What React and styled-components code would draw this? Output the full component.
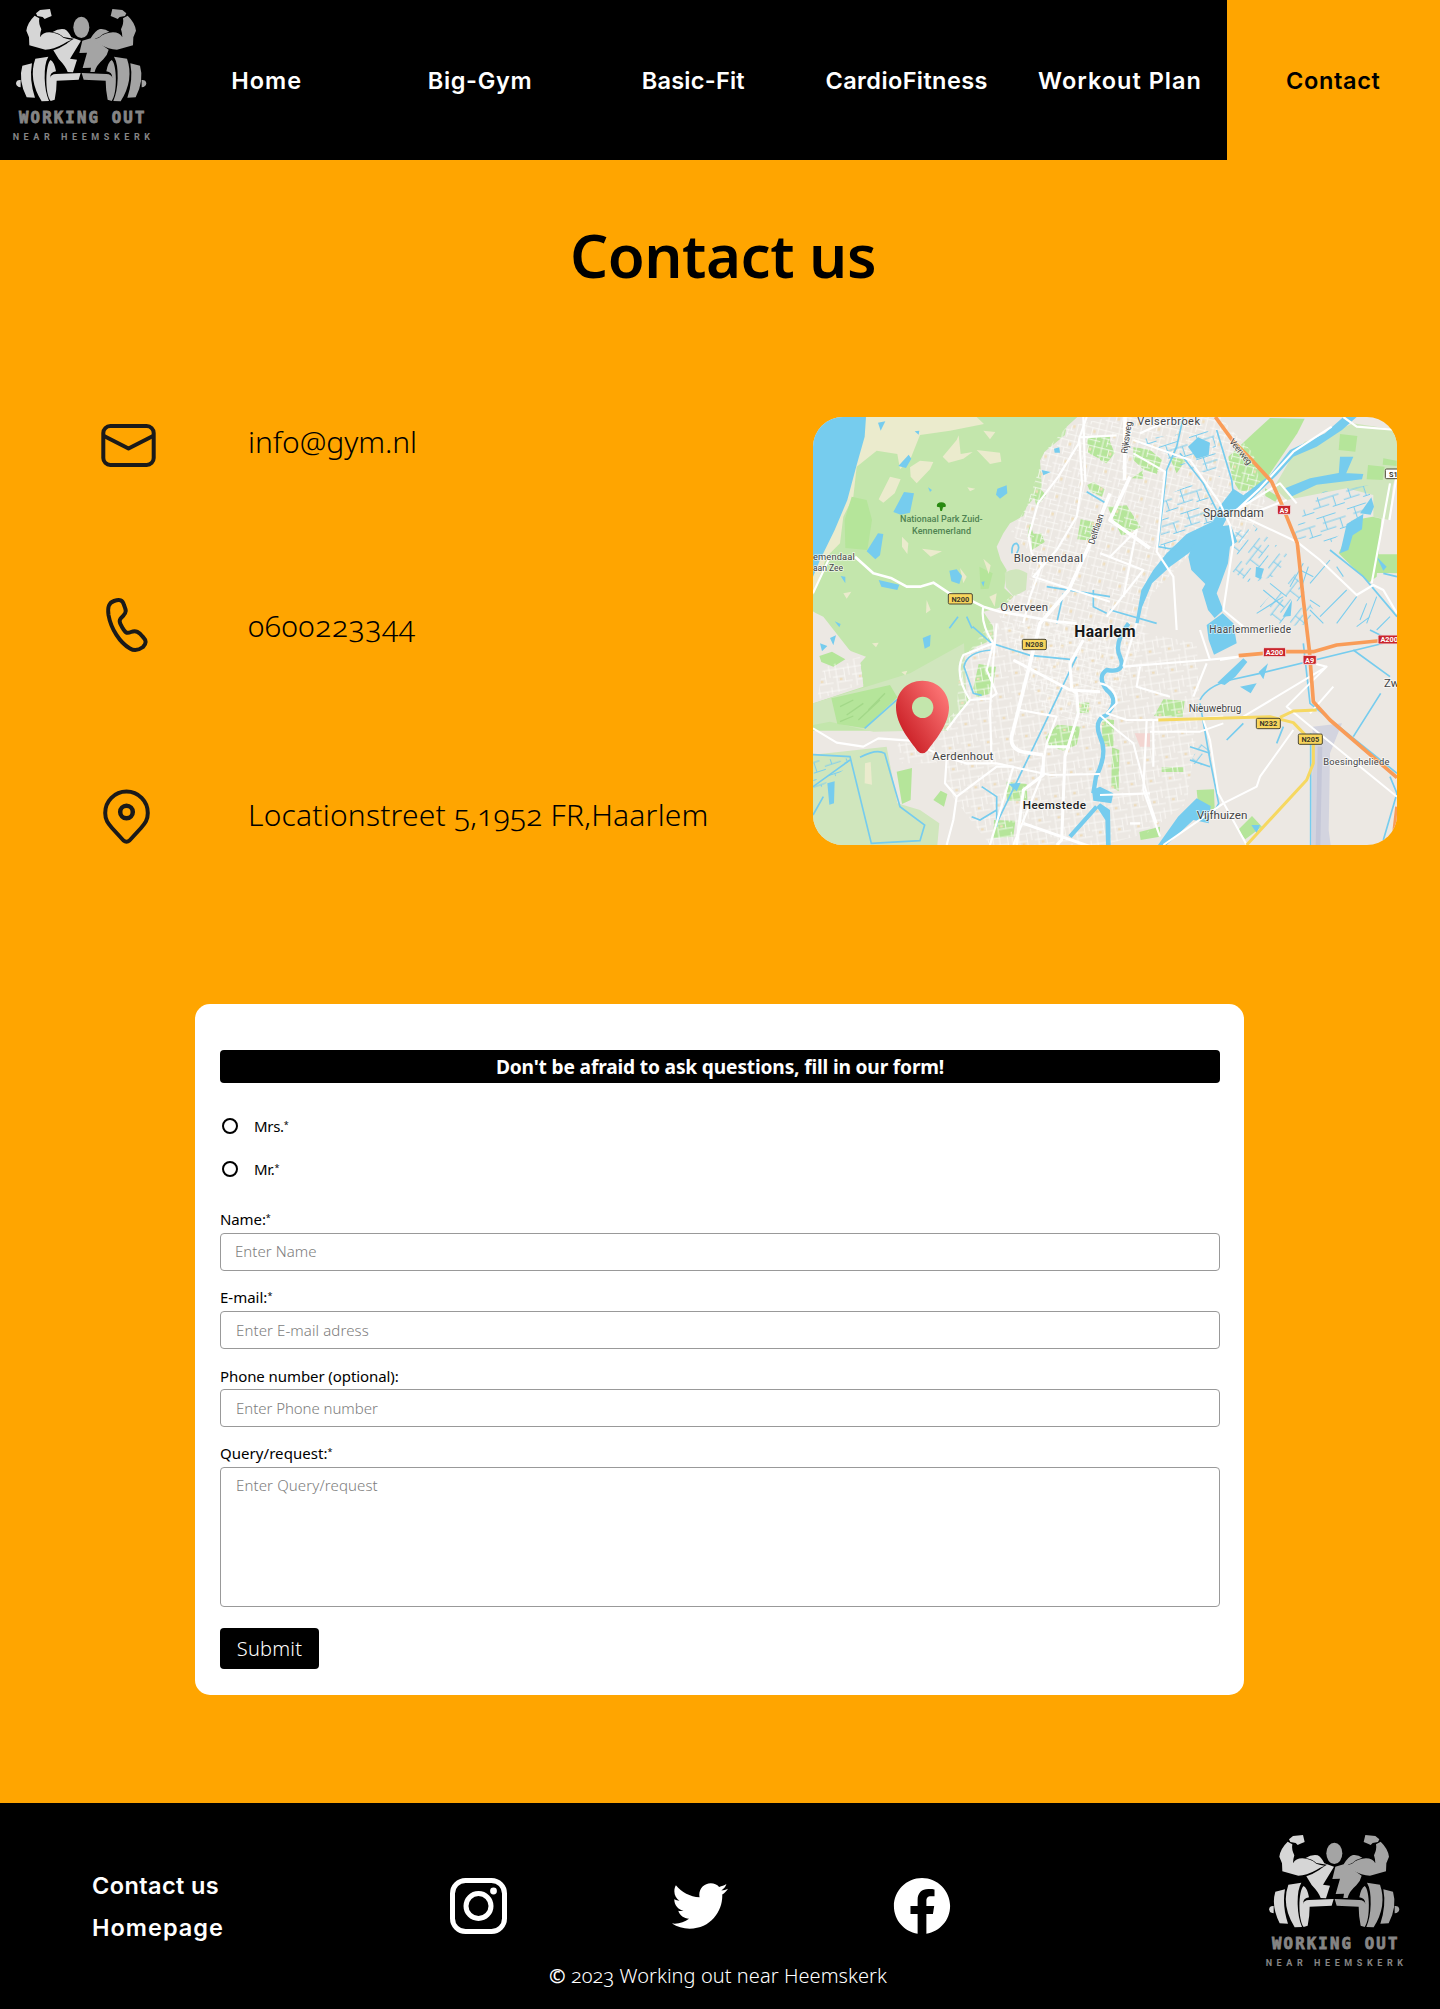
import React from "react";
import styled, { createGlobalStyle, css } from "styled-components";
import { FaFacebook, FaTwitter } from "react-icons/fa";

const GlobalStyle = createGlobalStyle`
  *, *::before, *::after { box-sizing: border-box; }
  body { margin: 0; background: #ffa500; }
`;

const bodyFont = css`
  font-family: "Noto Sans", "Open Sans", sans-serif;
  font-variant-numeric: oldstyle-nums;
`;
const navFont = css`
  font-family: Inter, "Open Sans", sans-serif;
  font-size: 23.5px;
  font-weight: 600;
`;

const Page = styled.div`
  ${bodyFont}
  display: flex;
  flex-direction: column;
  width: 1440px;
  min-height: 2009px;
  background: #ffa500;
  color: #000;
`;

/* Header */
const Header = styled.header`
  display: flex;
  height: 160px;
  background: #000;
`;
const LogoArt = styled.svg`
  display: block;
  flex: none;
  width: 160px;
  height: 160px;
`;
const Nav = styled.nav`
  display: grid;
  grid-template-columns: repeat(6, 1fr);
  flex: 1;
`;
const NavLink = styled.a`
  ${navFont}
  display: flex;
  align-items: center;
  justify-content: center;
  letter-spacing: ${(p) => p.$spacing}px;
  color: ${(p) => (p.$active ? "#000" : "#fff")};
  background: ${(p) => (p.$active ? "#ffa500" : "transparent")};
  text-decoration: none;
  white-space: nowrap;
`;

/* Contact details */
const Title = styled.h1`
  margin: 59px 0 126px;
  padding-left: 6px;
  font-size: 60px;
  font-weight: 560;
  line-height: 72px;
  letter-spacing: ${(p) => p.$spacing}px;
  text-align: center;
`;
const ContactSection = styled.section`
  display: grid;
  grid-template-columns: 1fr 584px;
  height: 428px;
  padding-right: 43px;
`;
const DetailList = styled.div`
  display: flex;
  flex-direction: column;
  padding-left: 98px;
`;
const Detail = styled.div`
  display: grid;
  flex: none;
  grid-template-columns: 60px 1fr;
  column-gap: 90px;
  align-items: center;
  height: 56px;
  margin-top: ${(p) => p.$top}px;
`;
const DetailIcon = styled.svg`
  display: block;
  width: 60px;
  height: 60px;
  overflow: visible;
  fill: none;
  stroke: #1a1a1a;
  stroke-width: 4;
  stroke-linejoin: round;
`;
const DetailText = styled.span`
  padding-bottom: ${(p) => p.$lift}px;
  font-size: 30px;
  font-weight: 340;
  line-height: 40px;
  letter-spacing: ${(p) => p.$spacing}px;
  white-space: nowrap;
`;
const MapArt = styled.svg`
  display: block;
  width: 584px;
  height: 428px;
  border-radius: 30px;
  font-family: Roboto, sans-serif;
  font-variant-numeric: lining-nums;
`;

/* Form */
const FormCard = styled.form`
  display: flex;
  flex-direction: column;
  align-items: stretch;
  width: 1049px;
  height: 691px;
  margin: 159px 0 108px 195px;
  padding: 46px 24px 0 25px;
  border-radius: 15px;
  background: #fff;
`;
const FormHeading = styled.h2`
  flex: none;
  margin: 0 0 21px;
  height: 33px;
  border-radius: 4px;
  background: #000;
  color: #fff;
  font-size: 19.2px;
  font-weight: 700;
  line-height: 33px;
  letter-spacing: ${(p) => p.$spacing}px;
  text-align: center;
`;
const RadioRow = styled.label`
  display: flex;
  flex: none;
  align-items: center;
  gap: 16px;
  height: 43px;
  padding-left: 2px;
  font-size: 15px;
  font-weight: 370;
  line-height: 20px;
  letter-spacing: ${(p) => p.$spacing}px;
`;
const Radio = styled.input.attrs({ type: "radio", name: "salutation" })`
  appearance: none;
  width: 16px;
  height: 16px;
  margin: 0;
  border: 2px solid #000;
  border-radius: 50%;
`;
const Required = styled.span`
  font-size: 9px;
  line-height: 1;
  vertical-align: 4px;
`;
const Field = styled.label`
  display: flex;
  flex: none;
  flex-direction: column;
  gap: ${(p) => p.$gap ?? 4}px;
  margin-top: ${(p) => p.$top}px;
`;
const FieldLabel = styled.span`
  height: 20px;
  font-size: 15px;
  font-weight: 370;
  line-height: 20px;
  letter-spacing: ${(p) => p.$spacing}px;
`;
const control = css`
  ${bodyFont}
  width: 1000px;
  border: 1px solid #999;
  border-radius: 4px;
  background: #fff;
  font-size: 15px;
  font-weight: 350;
  letter-spacing: ${(p) => p.$spacing}px;
  &::placeholder { color: #7c7c7c; opacity: 1; }
`;
const TextInput = styled.input`
  ${control}
  height: 38px;
  padding: 0 15px ${(p) => p.$lift ?? 0}px ${(p) => p.$inset ?? 15}px;
`;
const TextArea = styled.textarea`
  ${control}
  height: 140px;
  padding: 7px 15px;
  line-height: 20px;
  resize: none;
`;
const SubmitButton = styled.button`
  ${bodyFont}
  align-self: flex-start;
  width: 99px;
  height: 41px;
  margin-top: 21px;
  padding: 0;
  border: 0;
  border-radius: 4px;
  background: #000;
  color: #fff;
  font-size: 20px;
  font-weight: 300;
  letter-spacing: ${(p) => p.$spacing}px;
`;

/* Footer */
const Footer = styled.footer`
  display: grid;
  grid-template-columns: 450px 501px 1fr 187px;
  height: 206px;
  background: #000;
  color: #fff;
`;
const FooterLinks = styled.nav`
  display: flex;
  flex-direction: column;
  gap: 15px;
  padding: 69px 0 0 92px;
`;
const FooterLink = styled.a`
  ${navFont}
  line-height: 27px;
  letter-spacing: ${(p) => p.$spacing}px;
`;
const FooterMiddle = styled.div`
  display: flex;
  flex-direction: column;
  padding-top: 75px;
`;
const Socials = styled.div`
  display: flex;
  align-items: center;
  justify-content: space-between;
  height: 56px;
  svg { display: block; }
`;
const Copyright = styled.p`
  margin: 28px 0 0 99px;
  font-size: 20px;
  font-weight: 320;
  line-height: 28px;
  letter-spacing: ${(p) => p.$spacing}px;
  white-space: nowrap;
`;
const CopySign = styled.span`
  font-weight: 600;
`;
const FooterLogo = styled.div`
  grid-column: 4;
  padding-top: 23px;
`;

function Logo() {
  const arm = "M108 40L120 30L150 27L155 48L142 53L134 57L128 51L112 48ZM104 47L118 55Q115 70 124 88Q120 100 120 112Q128 97 148 97Q172 98 190 113Q202 118 215 119Q200 125 190 132Q160 149 136 149L88 136L87 112L79 92Q82 68 104 47Z";
  const bell = "M62 240Q49 239 48 250Q49 261 62 262ZM67 197L96 190Q87 240 105 293L80 292Q54 240 67 197ZM106 176L145 170Q133 190 134 235Q135 275 147 303L125 304Q84 238 106 176ZM152 180C136 192 134 280 152 303L164 299Q170 270 170 242L236 239L242 219L168 222Q152 223 150 234Q150 216 168 214Q163 186 152 180Z";
  return (
    <LogoArt viewBox="0 0 480 480">
      <g fill="#d6d6d6">
        <path d={arm} />
        <path d={bell} />
        <path d="M158 96Q175 85 194 88Q204 92 214 112L243 122L210 176L231 179L219 217L203 216Q198 200 176 177L160 151Q180 144 200 131Q205 126 222 116L190 111Q178 99 158 96Z" />
      </g>
      <g fill="#a4a4a4">
        <ellipse cx="244" cy="82" rx="24" ry="32" />
        <g transform="matrix(-1 0 0 1 487 0)">
          <path d={arm} />
          <path d={bell} />
        </g>
        <path d="M247 122L272 115Q286 91 300 87Q315 85 328 95Q310 99 298 111L282 118L326 149Q322 166 310 178Q288 197 284 216L271 216L273 203L248 204L261 158L238 159Z" />
      </g>
      <text x="57" y="370" fill="#858585" stroke="#858585" strokeWidth="2.5" fontFamily="'DejaVu Sans Mono', monospace" fontWeight="700" fontSize="47" textLength="376" lengthAdjust="spacing">WORKING OUT</text>
      <text x="38" y="419" fill="#858585" fontFamily="Roboto, sans-serif" fontWeight="700" fontSize="27" textLength="412" lengthAdjust="spacing">NEAR HEEMSKERK</text>
    </LogoArt>
  );
}

function RoadSign({ x, y, w = 72, h = 31, color = "#f8d55c", ink = "#3c3a2c", children }) {
  return (
    <g>
      <rect x={x} y={y} width={w} height={h} rx="4" fill={color} stroke={ink === "#fff" ? "#f1dede" : "#4c4935"} strokeWidth="3" />
      <text x={x + w / 2} y={y + h / 2 + 8} fill={ink} fontSize="22" fontWeight="700" textAnchor="middle">{children}</text>
    </g>
  );
}

function CityMap() {
  return (
    <MapArt viewBox="9 21 1752 1284" preserveAspectRatio="none">
      <defs>
        <pattern id="streets" width="62" height="54" patternUnits="userSpaceOnUse" patternTransform="rotate(14)">
          <path d="M0 8H62M0 31H40M20 44H62M9 0V54M31 8V31M48 0V54M22 31V54" stroke="#fcfbf9" strokeWidth="2.3" fill="none" />
          <rect x="34" y="14" width="7" height="9" fill="#f1dfbd" />
        </pattern>
        <pattern id="streetsB" width="58" height="64" patternUnits="userSpaceOnUse" patternTransform="rotate(-9)">
          <path d="M0 12H58M0 35H36M14 52H58M12 0V64M36 12V52M50 0V35" stroke="#fcfbf9" strokeWidth="2.3" fill="none" />
          <rect x="20" y="40" width="8" height="7" fill="#efddbd" />
        </pattern>
        <pattern id="ditches" width="96" height="70" patternUnits="userSpaceOnUse" patternTransform="rotate(-18)">
          <path d="M0 10H60M14 29H86M0 50H50M22 10V50M68 29V60M58 60H96" stroke="#7bcdee" strokeWidth="3" fill="none" />
        </pattern>
        <pattern id="ditchesB" width="76" height="88" patternUnits="userSpaceOnUse" patternTransform="rotate(38)">
          <path d="M8 0V56M24 14V88M42 0V50M60 26V80M8 30H42M24 68H60" stroke="#7bcdee" strokeWidth="3" fill="none" />
        </pattern>
        <linearGradient id="pin" x1="0" y1="1" x2="1" y2="0.15">
          <stop offset="0.1" stopColor="#c5161d" />
          <stop offset="1" stopColor="#ff7a7a" />
        </linearGradient>
      </defs>
      <rect x="9" y="21" width="1752" height="1284" fill="#ece8e3" />

      {/* dunes, park and meadows */}
      <path fill="#ebebcd" d="M160 21H560V120L300 300L160 360L70 440L9 560V430L90 300Z" />
      <path fill="#c3e6ac" d="M330 75L420 62L522 42L500 21H802L770 50L765 75L704 125L690 152L696 235L650 290L640 318L600 340L580 370L560 410L572 450L590 480L583 535L610 560L580 590L520 605L550 650L550 688L500 710L456 740L440 800L478 870L430 930L410 962L9 962V880L160 830L150 750L120 722L40 620L9 605V556L50 440L90 400L100 320L130 260L140 170L200 122L262 132L270 178L300 150Z" />
      <path fill="#ece8e3" d="M9 604L48 640L38 670L124 724L168 740L150 760L160 826L9 880Z" />
      <path fill="#d0e6bd" d="M9 1034L230 1010L262 1180L330 1200L388 1240L382 1305H9ZM9 880L300 790L462 700L470 870L414 960L190 965L60 935L9 945Z" />
      <path fill="#b5e59a" d="M64 865L240 825L262 862L165 955L82 942ZM260 1085L306 1074L302 1170L276 1182ZM125 260L170 270L186 330L172 420L106 414L104 330ZM508 470L548 490L536 536L512 538Z" />
      <g fill="#b5e59a">
        <path d="M832 84L900 78V115L880 152L834 128ZM832 225L850 216L884 238L876 260L840 244ZM812 328L852 336L846 392L802 388ZM670 252L690 235L708 256L680 290ZM664 372L694 370L704 396L666 420ZM660 340L675 385L652 380ZM28 738L66 725L106 748L70 770L34 756Z" />
        <path d="M870 80L900 95L914 130L890 160L870 150ZM970 112L1018 118L1056 150L1040 192L1000 178L970 150ZM1078 140L1128 150L1100 190ZM892 290L950 286L992 352L935 378ZM965 205L1000 180L998 206Z" />
        <path d="M1255 140L1330 70L1380 24L1484 26L1462 70L1350 235L1290 245L1268 210Z" />
        <path d="M1365 235L1405 260L1396 275L1366 258Z" />
        <path d="M706 980L742 944L812 950L800 1004L760 1022L718 1008ZM806 876L838 878L836 910L800 908ZM506 762L558 770L545 850L500 862L490 835ZM590 1115L650 1122L652 1170L590 1174ZM552 1230L616 1232L610 1280L550 1285ZM370 1170L392 1142L412 1152L402 1190Z" />
        <path d="M1060 868L1124 872L1118 920L1032 918ZM875 925L912 930L910 1010L878 1008ZM906 1012L928 1020L926 1144L904 1130ZM1160 1140L1212 1138L1214 1196L1166 1202ZM1284 1260L1326 1218L1356 1250L1306 1288ZM988 1266L1050 1250L1050 1280L992 1290ZM1055 1072H1120V1086H1055Z" />
      </g>
      <path fill="#d0e6bd" d="M1484 95L1560 70L1630 40L1761 60V182L1748 230L1738 330L1690 320L1690 255L1610 235L1430 270L1392 232L1440 150ZM584 488Q618 466 652 490L648 540L612 560L588 532Z" />
      <path fill="#b5e59a" d="M1590 72L1642 78L1636 125L1586 120ZM1674 165L1724 170L1718 210L1670 208ZM1688 320L1714 326L1700 500L1676 518L1586 430L1632 330ZM1720 145L1760 152V168L1718 164ZM1705 433H1761V490L1700 488Z" />
      <path fill="none" stroke="#a3d889" strokeWidth="4" d="M90 890L130 870M110 915L160 880M145 930L210 870M175 900L225 850M90 935L130 918" />

      <g fill="#ebebcd">
        <path d="M300 172L330 152L370 156L360 178L320 220L302 200ZM398 140L440 90L446 76L452 132L488 126L460 146L416 158ZM500 120L570 128L574 155L540 162ZM520 62L556 66L540 88ZM206 268L240 200L272 208L254 250L220 278ZM276 380L295 400L292 432L276 410ZM336 416L396 424L362 440ZM520 446L542 466L536 492ZM470 500L450 474L460 520ZM350 570L362 600L348 610ZM100 550L124 545L110 566ZM538 560L560 550L554 590ZM165 1060L182 1056L186 1124L164 1120ZM472 232L496 236L480 244ZM186 700L206 698L198 712ZM274 786L292 782L286 796Z" />
      </g>

      {/* urban street grids */}
      <path fill="url(#streets)" d="M704 125L770 50L900 21H1230L1330 130L1366 280L1300 400L1150 420L1020 560L1000 700L870 960L700 900L600 690L560 600L600 560L660 540L655 420L600 370L650 290Z" />
      <path fill="url(#streetsB)" d="M450 760L540 640L860 640L1160 700L1170 900L1130 1180L1010 1270L880 1305H540L420 1150L380 960L440 900ZM40 770L150 740L160 820L20 870ZM262 1000L370 990L380 1060L270 1060Z" />

      {/* drainage channels */}
      <path fill="url(#ditches)" d="M1062 260L1160 215L1240 320L1190 400L1050 420ZM1540 245L1680 225L1680 290L1560 400L1450 385L1480 300ZM970 90L1210 60L1230 200L1120 170Z" />
      <path fill="url(#ditchesB)" d="M1270 370L1330 345L1440 440L1390 500L1320 520L1260 480ZM1350 590L1450 480L1530 640L1420 650ZM1170 1000L1200 1020V1070L1140 1060Z" />
      <path fill="url(#ditches)" d="M10 1050L120 1045L100 1080L10 1150Z" />

      {/* water */}
      <g fill="#76ccee">
        <path d="M9 21H168L164 80L140 165L112 270L74 360L30 450L9 500Z" />
        <path d="M282 246L312 250L300 308L272 314L250 306ZM204 370L220 372L210 436L196 448L170 424ZM562 236L590 226L592 250L570 266L558 254ZM418 482L440 478L456 498L448 522L424 514ZM265 168L296 134L304 146L288 174ZM206 510L268 524L262 540L214 530ZM92 498L106 500L106 520ZM338 684L362 674L360 708L344 716ZM52 1120L74 1114L72 1180L58 1184ZM695 180L722 186L700 196ZM732 116L748 112L750 128L734 128ZM314 64L328 62L326 74ZM204 38L226 34L212 62ZM354 232L366 240L360 246ZM514 516L524 514L520 530ZM74 634L92 642L88 652ZM60 684L78 676L70 706ZM30 700L52 708L36 724Z" />
        <path d="M1134 110L1164 82L1200 98L1196 136L1160 146Z" />
        <path d="M1228 290L1270 236L1300 256L1360 210L1380 196L1440 120L1545 70L1600 21H1640L1596 60L1520 110L1450 140L1400 196L1310 282L1262 304L1232 360L1080 470L1026 520L996 592L986 640H976L994 540L1030 480L1070 430L1130 372L1210 334Z" />
        <path d="M1262 345L1282 395L1260 410L1254 460L1232 520L1220 550L1240 600L1214 624L1194 600L1176 540L1186 522L1144 480L1135 440L1148 405L1182 382L1220 350Z" />
        <path d="M1425 235L1500 205L1590 188L1660 192L1656 208L1520 224L1440 262ZM1590 140H1630L1606 196L1586 194ZM1650 310L1684 262L1692 290L1682 314ZM1590 430L1610 342L1660 312L1656 358L1628 376L1615 420Z" />
        <path d="M1190 645L1238 610L1270 640L1280 700L1212 734L1196 690ZM1222 818L1300 745L1312 756L1276 800L1244 825ZM1290 830L1340 820L1322 850ZM1346 786L1374 760L1360 808ZM1418 620L1446 570L1442 618ZM1160 1165L1202 1188L1196 1240L1150 1230L1070 1305H1044L1104 1220Z" />
        <path d="M846 1140L870 1130L910 1150L904 1180L850 1172ZM870 1180L900 1200L902 1305H888L886 1230L860 1190ZM1324 1245H1350L1340 1270ZM596 1122L632 1118L620 1144ZM1700 440L1730 470L1720 482ZM1338 470L1362 476L1352 508L1336 500Z" />
      </g>
      <g fill="none" stroke="#76ccee" strokeWidth="5">
        <path d="M9 1034L120 1040L184 1300L330 1292L344 1245L270 1190L224 1030Q200 1015 150 1042M9 1130L120 1050M9 1215L40 1160M164 955L262 868M488 650L545 700L660 736L780 748M418 655L444 620M470 620L486 655" />
        <path d="M545 720Q470 725 462 770L490 850L515 856M800 740L700 950L560 1240M760 550L740 640M710 530L900 560M830 245L888 280M900 600L1040 640M850 540V590L890 610M606 430Q604 400 620 400Q632 410 620 430" />
        <path d="M1120 21L1100 110L1070 180L1044 410L1100 420M1110 130L1180 220L1220 300M1220 60L1265 210L1270 250M1680 660L1761 700M1400 1000L1420 950M1630 980L1712 850M1250 990L1300 940M1170 880L1200 1050L1226 1180L1210 1210M1170 870Q1190 830 1260 810L1350 790L1761 690" />
        <path d="M1502 970L1502 1305M1554 1020L1546 1305M1480 700L1500 880L1761 1090M1740 1100L1761 1150L1720 1290M1140 1010L1200 1030M1140 1050L1200 1070M560 1200L510 1230L485 1220M515 1130L560 1160V1250M1560 420L1660 500L1761 620M1720 490L1761 500M1630 720L1740 800" />
        <path d="M956 640Q910 700 930 740Q950 790 890 780Q860 800 890 840Q930 870 890 915Q850 930 870 980Q895 1030 858 1100L850 1150M780 1280L860 1190" strokeWidth="13" />
      </g>
      <path fill="none" stroke="#7bcdee" strokeWidth="3.2" d="M1480 460L1440 530M1495 470L1475 530M1470 480L1510 500M1560 450L1500 520M1580 470L1600 500M1610 540L1530 620M1640 560L1580 640M1670 580L1650 630M1700 560L1670 640M1530 590L1500 570M1740 620L1700 660M1500 600L1540 640M1380 520L1430 560M1360 540L1420 590M1340 610L1420 560M1680 620L1640 650" />
      <path d="M1508 950L1596 940L1560 1030L1556 1260L1562 1305H1504Z" fill="#d3d4df" />
      <path d="M1530 1010L1524 1305" stroke="#c5c7d8" strokeWidth="14" />
      <path d="M974 970H1020V1010H990Z" fill="#f3d5d1" />

      {/* roads */}
      <g fill="none" stroke="#fff" strokeWidth="6.5" strokeLinejoin="round">
        <path d="M135 440L190 490L245 505L290 530H330L370 518L415 548L488 574L520 590L570 605L740 635L800 640" strokeWidth="8" />
        <path d="M9 550L60 440M9 955L80 998L160 1010L205 985L300 992L400 1040L470 1060H560L720 1095L870 1092" />
        <path d="M830 21L808 85L806 100L745 200L684 280L656 380L665 430L695 465L660 560L640 640M808 82L920 76M808 85L816 220L800 320L740 420L670 500L775 535L900 575" />
        <path d="M900 250L836 410L776 540L690 640L670 720L630 880L605 980Q600 1018 640 1026L700 1035M960 200L900 330L1020 415M945 21L944 210" strokeWidth="11" />
        <path d="M820 21L826 215M970 130L1065 185L1040 425L1090 500L1100 660M970 90L1140 150L1230 280L1260 345L1270 400L1240 600L1300 650M990 70L1080 30M900 440L980 360L940 560M890 620L1000 480L870 430" />
        <path d="M1600 21L1640 50L1761 60M1565 50L1450 125L1350 235L1280 300L1410 220L1460 280M1430 270L1300 320L1460 395L1530 450L1640 555L1690 525L1720 540L1761 610M1740 220L1685 520M1761 190L1738 330" />
        <path d="M520 590Q510 640 550 700L460 735Q430 790 480 870L540 865L560 850L530 780L550 700M480 870L440 920L410 960M560 640L550 750L540 900L545 1060M630 900L740 920L710 1000L690 1110L610 1305M410 1045L405 1120L440 1160L430 1230L410 1305M440 1160L560 1070L610 1070L540 1305" />
        <path d="M820 690L780 760L785 840L800 850L805 910L765 1040L755 1290L740 1305M610 750L780 840L870 845M708 1010H780M700 1035L700 1095L640 1140L620 1305M640 1240L870 1320" strokeWidth="9" />
        <path d="M870 820Q920 830 920 880L890 910L950 930H1100L1240 920M940 770L1190 750L1290 740M1190 760L1150 860M990 770L980 830L1080 860M1010 930L1000 1140L1050 1280M870 1155L1020 1150M1030 930V1070M960 1240L990 1240M1170 660L1200 750M980 640L940 770" />
        <path d="M870 915L920 960L970 1000L1010 1150L1040 1240M1230 750L1290 740M1300 920L1550 770L1430 890L1490 940L1761 1160M1570 830L1500 910M1450 960L1350 1100L1340 1130L1240 1180L1060 1305M1180 930L1200 990L1225 1150L1310 1305M1020 965H1170L1240 940M1550 770L1510 760" strokeWidth="6" />
      </g>
      <g fill="none" strokeLinecap="butt" strokeLinejoin="round">
        <path d="M1216 21L1270 95L1330 155L1385 215L1414 280L1462 400L1480 570L1498 720L1510 875L1560 930L1761 1103M1286 737L1420 725H1510L1580 705L1761 687M1753 1260L1761 1190" stroke="#f99c58" strokeWidth="11" />
        <path d="M1045 930L1380 920L1450 938L1510 1000V1060L1490 1110L1310 1305M1410 922L1450 903L1520 900" stroke="#f6d861" strokeWidth="9" />
      </g>

      <path d="M381 290Q378 278 394 277Q410 278 407 290L399 292L396 303H391L389 292Z" fill="#288a10" />
      <g fill="#4f8352" fontSize="27" fontWeight="500">
        <text x="270" y="337" textLength="248">Nationaal Park Zuid-</text>
        <text x="306" y="371" textLength="177">Kennemerland</text>
      </g>
      <g fill="#444" stroke="#fff" strokeWidth="5" strokeOpacity="0.65" paintOrder="stroke" fontSize="30">
        <text x="9" y="450" fontSize="28" textLength="125">emendaal</text>
        <text x="9" y="484" fontSize="26" textLength="90">aan Zee</text>
        <text x="611" y="455" textLength="208" fontSize="34">Bloemendaal</text>
        <text x="571" y="604" textLength="143" fontSize="34">Overveen</text>
        <text x="982" y="45" textLength="188" fontSize="33">Velserbroek</text>
        <text x="1179" y="320" textLength="182" fontSize="36">Spaarndam</text>
        <text x="1198" y="669" textLength="245">Haarlemmerliede</text>
        <text x="367" y="1049" textLength="183" fontSize="34">Aerdenhout</text>
        <text x="1136" y="907" textLength="158">Nieuwebrug</text>
        <text x="1540" y="1065" textLength="198" fontSize="28">Boesingheliede</text>
        <text x="1160" y="1226" textLength="152" fontSize="35">Vijfhuizen</text>
        <text x="1722" y="830" fontSize="34">Zw</text>
        <text transform="translate(852 405) rotate(-72)" textLength="95" fontSize="27">Delftlaan</text>
        <text transform="translate(952 132) rotate(-82)" textLength="98" fontSize="27">Rijksweg</text>
        <text transform="translate(1256 95) rotate(51)" textLength="92" fontSize="27">Veerweg</text>
        <text x="638" y="1196" textLength="190" fontSize="35" fontWeight="500" fill="#222">Heemstede</text>
        <text x="793" y="680" textLength="184" fontSize="47" fontWeight="700" fill="#181818">Haarlem</text>
      </g>
      <RoadSign x={415} y={551}>N200</RoadSign>
      <RoadSign x={637} y={688}>N208</RoadSign>
      <RoadSign x={1339} y={925}>N232</RoadSign>
      <RoadSign x={1465} y={972}>N205</RoadSign>
      <RoadSign x={1402} y={286} w={40} h={27} color="#c9252c" ink="#fff">A9</RoadSign>
      <RoadSign x={1479} y={736} w={40} h={27} color="#c9252c" ink="#fff">A9</RoadSign>
      <RoadSign x={1360} y={713} w={67} h={27} color="#c9252c" ink="#fff">A200</RoadSign>
      <RoadSign x={1704} y={675} w={67} h={27} color="#c9252c" ink="#fff">A200</RoadSign>
      <RoadSign x={1726} y={177} w={48} h={29} color="#fff">S1</RoadSign>

      <path d="M337 812C290 812 258 848 258 892C258 945 302 995 322 1022Q337 1038 352 1022C374 992 417 945 417 892C417 848 384 812 337 812Z" fill="url(#pin)" />
      <circle cx="338" cy="892" r="32" fill="#c3e6ac" />
    </MapArt>
  );
}

export default function App() {
  return (
    <Page>
      <GlobalStyle />
      <Header>
        <Logo />
        <Nav>
          <NavLink $spacing={0.95}>Home</NavLink>
          <NavLink $spacing={0.65}>Big-Gym</NavLink>
          <NavLink $spacing={0.25}>Basic-Fit</NavLink>
          <NavLink $spacing={0.4}>CardioFitness</NavLink>
          <NavLink $spacing={1}>Workout Plan</NavLink>
          <NavLink $spacing={0.65} $active>Contact</NavLink>
        </Nav>
      </Header>

      <Title $spacing={-0.5}>Contact us</Title>

      <ContactSection>
        <DetailList>
          <Detail $top={-2}>
            <DetailIcon viewBox="0 0 60 60">
              <rect x="5.3" y="11" width="50.4" height="39" rx="7" />
              <path d="M6 21L30.5 33.5L55 21" />
            </DetailIcon>
            <DetailText $lift={7} $spacing={-0.05}>info@gym.nl</DetailText>
          </Detail>
          <Detail $top={125}>
            <DetailIcon viewBox="0 0 60 60">
              <path d="M16 5C10 7 9.5 12 10.5 19C13 33 22 47 32 52.5C37 55.5 41 54 45 51C49 47 48 44 45 41C41 36 38 34 33 36C28 38 27 36 24 31C21 26 20.5 24 25 20C29 16 28 14 26 9C24.5 4 22 3 16 5Z" />
            </DetailIcon>
            <DetailText $lift={1} $spacing={0.65}>0600223344</DetailText>
          </Detail>
          <Detail $top={135}>
            <DetailIcon viewBox="0 0 60 60">
              <path d="M28.5 4.5A21.3 21.3 0 0 0 7.2 26C7.2 33 10 36.5 14 41L25.5 53.5Q28.5 56 31.5 53.5L43 41C47 36.5 49.8 33 49.8 26A21.3 21.3 0 0 0 28.5 4.5Z" />
              <circle cx="28.5" cy="25" r="6.3" strokeWidth="4.5" />
            </DetailIcon>
            <DetailText $lift={4} $spacing={0.2}>Locationstreet 5,1952 FR,Haarlem</DetailText>
          </Detail>
        </DetailList>
        <CityMap />
      </ContactSection>

      <FormCard>
        <FormHeading $spacing={-0.18}>Don't be afraid to ask questions, fill in our form!</FormHeading>
        <RadioRow $spacing={-0.3}><Radio /><span>Mrs.<Required>*</Required></span></RadioRow>
        <RadioRow $spacing={-0.3}><Radio /><span>Mr.<Required>*</Required></span></RadioRow>
        <Field $top={19}>
          <FieldLabel $spacing={-0.1}>Name:<Required>*</Required></FieldLabel>
          <TextInput placeholder="Enter Name" $spacing={0.05} $lift={3} $inset={14} />
        </Field>
        <Field $top={16}>
          <FieldLabel $spacing={0}>E-mail:<Required>*</Required></FieldLabel>
          <TextInput placeholder="Enter E-mail adress" $spacing={0.1} $lift={1} />
        </Field>
        <Field $top={17} $gap={3}>
          <FieldLabel $spacing={-0.08}>Phone number (optional):</FieldLabel>
          <TextInput placeholder="Enter Phone number" $spacing={-0.05} />
        </Field>
        <Field $top={16}>
          <FieldLabel $spacing={0.05}>Query/request:<Required>*</Required></FieldLabel>
          <TextArea placeholder="Enter Query/request" $spacing={0.12} />
        </Field>
        <SubmitButton type="button" $spacing={0.2}>Submit</SubmitButton>
      </FormCard>

      <Footer>
        <FooterLinks>
          <FooterLink $spacing={0.4}>Contact us</FooterLink>
          <FooterLink $spacing={1}>Homepage</FooterLink>
        </FooterLinks>
        <FooterMiddle>
          <Socials>
            <svg width="57" height="56" viewBox="0 0 57 56" fill="none" stroke="#fff" strokeWidth="5">
              <rect x="2.5" y="2.5" width="52" height="51" rx="13" />
              <circle cx="28.5" cy="28" r="12.5" />
              <circle cx="43.5" cy="13" r="3.4" fill="#fff" stroke="none" />
            </svg>
            <FaTwitter size={56} color="#fff" />
            <FaFacebook size={58} color="#fff" />
          </Socials>
          <Copyright $spacing={0.06}><CopySign>©</CopySign> 2023 Working out near Heemskerk</Copyright>
        </FooterMiddle>
        <FooterLogo>
          <Logo />
        </FooterLogo>
      </Footer>
    </Page>
  );
}
